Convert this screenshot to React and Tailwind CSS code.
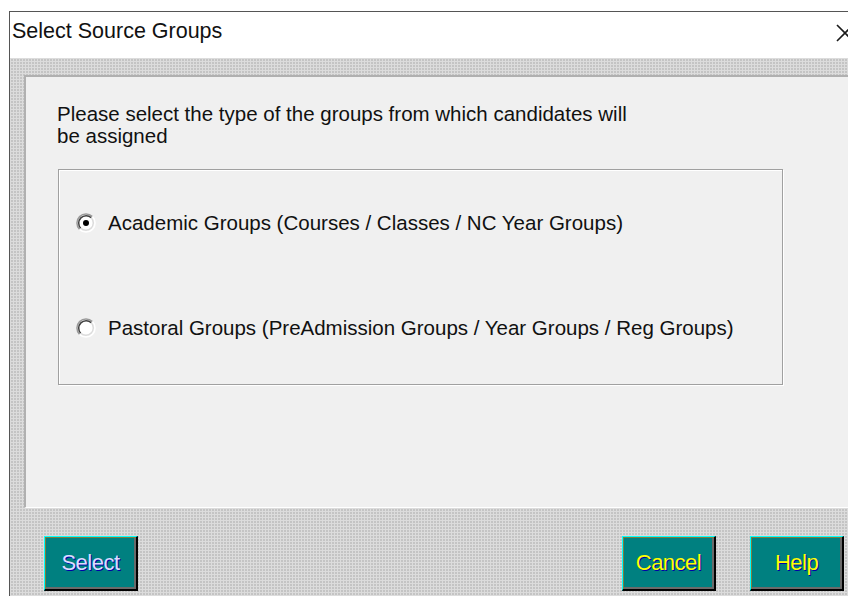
import { useState } from 'react';

const options = [
    { id: 'academic', label: 'Academic Groups (Courses / Classes / NC Year Groups)' },
    { id: 'pastoral', label: 'Pastoral Groups (PreAdmission Groups / Year Groups / Reg Groups)' },
];

// Classic sunken radio: dark ring top-left, light ring bottom-right
function RadioMark({ checked }) {
    return (
        <svg width="20" height="20" viewBox="0 0 20 20" className="shrink-0">
            <circle cx="10" cy="10" r="8.5" fill="#ffffff" />
            <path d="M3.6 16.4 A9 9 0 0 1 16.4 3.6" stroke="#9a9a9a" strokeWidth="1.5" fill="none" />
            <path d="M16.4 3.6 A9 9 0 0 1 3.6 16.4" stroke="#ffffff" strokeWidth="1.5" fill="none" />
            <path d="M4.7 15.3 A7.5 7.5 0 0 1 15.3 4.7" stroke="#404040" strokeWidth="1.5" fill="none" />
            <path d="M15.3 4.7 A7.5 7.5 0 0 1 4.7 15.3" stroke="#dcdcdc" strokeWidth="1.5" fill="none" />
            {checked && <circle cx="10" cy="10" r="3" fill="#000000" />}
        </svg>
    );
}

function TealButton({ children, light = false }) {
    return (
        <button
            className={`w-[94px] h-[55px] bg-[#008080] border-t border-l border-[#00ffff] border-r-2 border-b-2 border-r-black border-b-black shadow-[inset_1px_1px_0_#7d7d3c,inset_-2px_-2px_0_#6a6a6a] flex items-center justify-center text-[22px] tracking-[-0.5px] leading-none [text-shadow:1px_1px_0_#0000a8] ${light ? 'text-[#dcdcff]' : 'text-[#ffff00]'}`}
        >
            {children}
        </button>
    );
}

export default function App() {
    const [group, setGroup] = useState('academic');

    return (
        <div className="w-[848px] h-[596px] bg-white overflow-hidden font-['Liberation_Sans',Arial,sans-serif]">
            <div className="ml-[9px] mt-[11px] w-[860px] h-[585px] border-l border-t border-[#555555] flex flex-col">

                {/* Title bar */}
                <div className="h-[46px] bg-white flex items-start pt-[9px] pl-[2px] shrink-0">
                    <span className="text-[21.5px] leading-none text-[#111111]">Select Source Groups</span>
                    <svg width="20" height="20" viewBox="0 0 20 20" className="ml-auto mr-[14px] mt-[2px]">
                        <path d="M2 2 L18 18 M18 2 L2 18" stroke="#1a1a1a" strokeWidth="1.6" />
                    </svg>
                </div>

                {/* Dotted body */}
                <div className="flex-1 flex flex-col bg-[#c4c4c4] bg-[linear-gradient(90deg,#dcdcdc_1px,transparent_1px),linear-gradient(#dcdcdc_1px,transparent_1px)] bg-[length:3px_3px]">

                    <div className="ml-[14px] mt-[17px] h-[433px] bg-[#f0f0f0] border-l-2 border-t-2 border-[#b0b0b0] border-b border-b-white">
                        <p className="ml-[31px] mt-[26px] text-[20.5px] leading-[22px] text-[#111111]">
                            Please select the type of the groups from which candidates will
                            <br />
                            be assigned
                        </p>

                        <div className="ml-[32px] mt-[22px] w-[725px] h-[216px] border border-[#a0a0a0] shadow-[1px_1px_0_#ffffff,inset_1px_1px_0_#ffffff] flex flex-col pt-[41px] pl-[17px] gap-[81px]">
                            {options.map((option) => (
                                <label
                                    key={option.id}
                                    className="flex items-center gap-[12px] h-[24px] cursor-default"
                                    onClick={() => setGroup(option.id)}
                                >
                                    <RadioMark checked={group === option.id} />
                                    <span className="text-[20.5px] leading-[24px] text-[#111111] whitespace-nowrap">
                                        {option.label}
                                    </span>
                                </label>
                            ))}
                        </div>
                    </div>

                    {/* Buttons */}
                    <div className="ml-[34px] mt-[28px] w-[800px] flex">
                        <TealButton light>Select</TealButton>
                        <div className="ml-auto flex gap-[34px]">
                            <TealButton>Cancel</TealButton>
                            <TealButton>Help</TealButton>
                        </div>
                    </div>
                </div>
            </div>
        </div>
    );
}
